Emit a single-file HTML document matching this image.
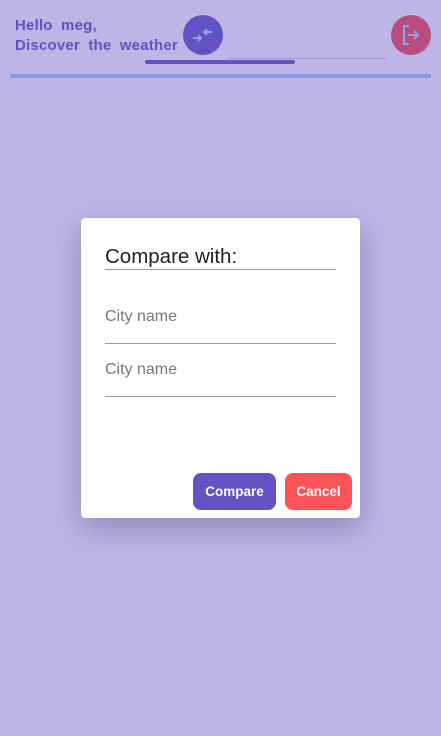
<!DOCTYPE html>
<html><head><meta charset="utf-8"><style>
html,body{margin:0;padding:0;width:441px;height:736px;background:#bdb5e5;font-family:"Liberation Sans",sans-serif;overflow:hidden;position:relative}
.hello{position:absolute;left:15px;top:16px;color:#6352c2;font-weight:bold;font-size:15px;line-height:20px;word-spacing:4px;letter-spacing:0.2px}
.c1{position:absolute;left:183px;top:15px;width:40px;height:40px;border-radius:50%;background:#6352c2}
.c2{position:absolute;left:391px;top:15px;width:40px;height:40px;border-radius:50%;background:#b94d80}
.bar1{position:absolute;left:228px;top:58px;width:158px;height:1px;background:#a197cd}
.bar2{position:absolute;left:145px;top:60px;width:150px;height:4px;border-radius:2px;background:#6352c2}
.line{position:absolute;left:10px;top:74px;width:421px;height:4px;background:#7f9be3}
.dlg{position:absolute;left:81px;top:218px;width:279px;height:300px;background:#fff;border-radius:4px;box-shadow:0 10px 30px rgba(60,50,110,.35)}
.t{position:absolute;left:24px;top:27px;font-size:20.5px;color:#222}
.u{position:absolute;left:24px;width:231px;height:1px;background:#9a9a9a}
.p{position:absolute;left:24px;font-size:16px;color:#777}
.b{position:absolute;top:255px;height:37px;border-radius:8px;color:#fff;font-weight:bold;font-size:13.5px;text-align:center;line-height:37px}
</style></head><body>
<div class="hello">Hello meg,<br>Discover the weather</div>
<div class="c1"><svg width="40" height="40" viewBox="0 0 40 40" fill="none" stroke="#8fa3ea" stroke-width="2"><path d="M10 23h8M15 20l3 3-3 3M29 17h-8M24 14l-3 3 3 3"/></svg></div>
<div class="bar1"></div><div class="bar2"></div>
<div class="c2"><svg width="40" height="40" viewBox="0 0 40 40" fill="none" stroke="#8fa3ea" stroke-width="2"><path d="M18 11h-5v18h5M17 20h10M23 16l4 4-4 4"/></svg></div>
<div class="line"></div>
<div class="dlg">
<div class="t">Compare with:</div>
<div class="u" style="top:51px"></div>
<div class="p" style="top:90px">City name</div>
<div class="u" style="top:125px"></div>
<div class="p" style="top:143px">City name</div>
<div class="u" style="top:178px"></div>
<div class="b" style="left:112px;width:83px;background:#6352c2">Compare</div>
<div class="b" style="left:204px;width:67px;background:#ff5457">Cancel</div>
</div>
</body></html>
